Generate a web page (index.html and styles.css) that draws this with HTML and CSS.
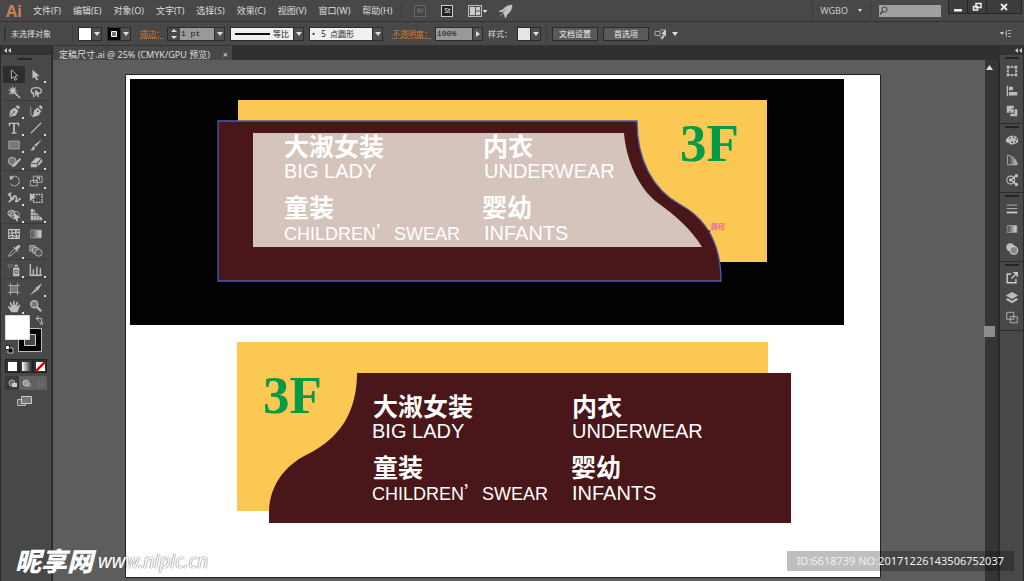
FILE: index.html
```html
<!DOCTYPE html>
<html lang="zh-CN">
<head>
<meta charset="utf-8">
<title>定稿尺寸.ai</title>
<link rel="stylesheet" href="styles.css">
</head>
<body>
<div class="app">
  <header class="menubar">
    <span class="logo">Ai</span>
    <nav class="menus">
      <button>文件(F)</button><button>编辑(E)</button><button>对象(O)</button><button>文字(T)</button><button>选择(S)</button><button>效果(C)</button><button>视图(V)</button><button>窗口(W)</button><button>帮助(H)</button>
    </nav>
    <div class="launchers">
      <button class="badge badge-off">Br</button>
      <button class="badge">St</button>
      <button class="plain" aria-label="排列文档"><svg width="20" height="12" viewBox="0 0 20 12"><rect x=".5" y=".5" width="13" height="11" fill="#555" stroke="#bbb"/><path d="M2 2h5v8H2zM8 2h4v3.500H8zM8 6.500h4V10H8z" fill="#ccc"/><path d="M14.500 5h5L17 8z" fill="#ddd"/></svg></button>
      <button class="plain" aria-label="GPU 性能"><svg width="14" height="14" viewBox="0 0 14 14"><path d="M13 1C8 1 5 4 3.500 6L0 7l3 1.200 5-4-4 5L5 10l1.500 4L8 10.500c3-2.500 5-4.500 5-9.500zM3 10l-2 2.500" fill="#c4c4c4" stroke="#c4c4c4" stroke-width=".6"/></svg></button>
    </div>
    <button class="workspace">WGBO <svg width="4" height="3" viewBox="0 0 4 3"><path d="M0 0h4L2 3z" fill="#ddd"/></svg></button>
    <label class="search"><svg width="11" height="11" viewBox="0 0 11 11"><circle cx="6.500" cy="4.500" r="3" fill="none" stroke="#333"/><path d="M4.500 6.500 1 10" stroke="#333" stroke-width="1.500"/></svg><input type="text" aria-label="搜索"></label>
    <div class="window-buttons">
      <button aria-label="最小化"><svg width="10" height="10" viewBox="0 0 10 10"><path d="M1 7h8v2.500H1z" fill="#eee"/></svg></button>
      <button aria-label="还原"><svg width="10" height="10" viewBox="0 0 10 10"><path d="M4 1.500h5v4H4zM1.500 4.500h4v3.500h-4z" fill="#333" stroke="#eee" stroke-width="1.500"/></svg></button>
      <button class="close" aria-label="关闭"><svg width="10" height="10" viewBox="0 0 10 10"><path d="m2 2 6 6M8 2 2 8" stroke="#eee" stroke-width="1.800"/></svg></button>
    </div>
  </header>

  <div class="options">
    <span class="handle"></span>
    <span class="state">未选择对象</span>
    <span class="rule"></span>
    <div class="field"><button class="swatch" aria-label="填色"></button><button class="drop" aria-label="填色列表"></button></div>
    <div class="field"><button class="swatch stroke-swatch" aria-label="描边颜色"><svg width="12" height="12" viewBox="0 0 12 12"><path d="M3.500 3.500h5v5h-5z" fill="#777" stroke="#fff"/></svg></button><button class="drop" aria-label="描边列表"></button></div>
    <label class="link" for="weight">描边：</label>
    <div class="field"><button class="spin" aria-label="增减"><svg width="8" height="12" viewBox="0 0 8 12"><path d="m1 4 3-3 3 3zM1 8l3 3 3-3z" fill="#ddd"/></svg></button><input id="weight" class="num" value="1 pt"><button class="drop" aria-label="粗细"></button></div>
    <div class="field"><select class="pick profile" aria-label="宽度配置"><option>等比</option></select><button class="drop" aria-label="配置列表"></button></div>
    <div class="field"><select class="pick" aria-label="画笔"><option>&nbsp;• &nbsp; 5 &nbsp;点圆形</option></select><button class="drop" aria-label="画笔列表"></button></div>
    <label class="link" for="opacity">不透明度：</label>
    <div class="field"><input id="opacity" class="num wide" value="100%"><button class="drop side" aria-label="不透明度滑块"></button></div>
    <span>样式：</span>
    <div class="field style-field"><button class="swatch" aria-label="样式"></button><button class="drop" aria-label="样式列表"></button></div>
    <span class="rule"></span>
    <button class="action">文档设置</button>
    <button class="action">首选项</button>
    <button class="plain similar" aria-label="选择类似对象"><svg width="24" height="12" viewBox="0 0 24 12"><path d="M1 3.500h5v4H1zM6 2h5M6 9h3" fill="none" stroke="#aaa"/><path d="m12 1-5 5 2.500.2L7 11l1.500.5L11 7l1 2z" fill="#ccc"/><path d="M18 4h6l-3 4z" fill="#ddd"/></svg></button>
    <button class="plain panel-menu" aria-label="面板菜单"><svg width="12" height="9" viewBox="0 0 12 9"><path d="M0 3h4L2 6zM5 4h2v1H5z" fill="#ccc"/><path d="M6.500 1v7M8 1.500h3M8 4.500h3M8 7.500h3" stroke="#aaa"/></svg></button>
  </div>

  <main class="work">
    <aside class="tools">
      <div class="collapse"><svg width="7" height="5" viewBox="0 0 7 5"><path d="M3 0v5L0 2.500zM7 0v5L4 2.500z" fill="#ccc"/></svg></div>
      <div class="grip"></div>
      <div class="tool-group">
        <button class="on" aria-label="选择"><svg viewBox="0 0 16 16"><path d="m5 2 7 7-3 .4L11 13l-2 1-1.500-4L5 12z" fill="#222" stroke="#c8c8c8"/></svg></button>
        <button class="more" aria-label="直接选择"><svg viewBox="0 0 16 16"><path d="m4 2 8 7-3.500.4 2 4-2 1-2-4L4 12z"/></svg></button>
        <button aria-label="魔棒"><svg viewBox="0 0 16 16"><path d="M6 0v4.500L2.500 2l2 3.500H1l3.500 2L2 11l4-2v3l1.500-3 7 6.500 1-1L9 7.500l3-.5-3-1.500L11 2 7.500 4z"/></svg></button>
        <button aria-label="套索"><svg viewBox="0 0 16 16"><path d="M6 10C1 10 1 3 8 3c7 0 8 6 3 7M5 8c-2 2 2 3 0 6" fill="none" stroke="#bbb" stroke-width="1.600"/><path d="m7 5 6 5-2.500.5 1 3-1.500.5-1.500-3L7 13z"/></svg></button>
      </div>
      <div class="tool-group">
        <button class="more" aria-label="钢笔"><svg viewBox="0 0 16 16"><path d="M2 15 4 7l5-3 4 4-3 5zM10 3l2-2 3 3-2 2z"/><path d="m2 15 5-5" stroke="#444"/><circle cx="8" cy="9" r="1" fill="#444"/></svg></button>
        <button aria-label="曲率"><svg viewBox="0 0 16 16"><path d="M4 15 6 7l4-3 4 4-3 5zM11 3l2-2 3 3-2 2z"/><path d="M1 4c3 0 0 4 1 7s3 3 3 3" fill="none" stroke="#bbb"/><circle cx="10" cy="8" r="1" fill="#444"/></svg></button>
        <button class="more" aria-label="文字"><svg viewBox="0 0 16 16"><path d="M2 2h12v4h-1l-1-2.500H9V13l2 .5v1H5v-1L7 13V3.500H4L3 6H2z"/></svg></button>
        <button class="more" aria-label="直线"><svg viewBox="0 0 16 16"><path d="M2 14 14 2" stroke="#bbb" stroke-width="1.300"/></svg></button>
        <button class="more" aria-label="矩形"><svg viewBox="0 0 16 16"><path d="M2 3.500h12v9H2z" fill="#777" stroke="#aaa"/></svg></button>
        <button class="more" aria-label="画笔"><svg viewBox="0 0 16 16"><path d="m15 1-7 9-2-2zM7 11c-1 3-3 4-6 3 3-1 2-3 4-5z"/></svg></button>
        <button class="more" aria-label="铅笔"><svg viewBox="0 0 16 16"><circle cx="6" cy="7" r="4.500" fill="#777" stroke="#bbb"/><path d="m15 3-8 8-2 3 4-1 7-8z"/></svg></button>
        <button class="more" aria-label="橡皮擦"><svg viewBox="0 0 16 16"><path d="m2 9 6-6h6l-5 6zM2 10h7v4H2zM10 10l5-6v4l-5 5z"/></svg></button>
      </div>
      <div class="tool-group">
        <button class="more" aria-label="旋转"><svg viewBox="0 0 16 16"><path d="M4 5a5.500 5.500 0 1 1 0 6" fill="none" stroke="#bbb" stroke-width="1.400" stroke-dasharray="2 1"/><path d="m3 2 .5 5L8 4z"/></svg></button>
        <button class="more" aria-label="比例缩放"><svg viewBox="0 0 16 16"><path d="M5 2.500h10v7H5zM1.500 7.500h8v6h-8z" fill="none" stroke="#bbb"/><path d="m7 8 4-4M9 4h3v3" fill="none" stroke="#ccc"/></svg></button>
        <button class="more" aria-label="宽度"><svg viewBox="0 0 16 16"><path d="M1 5c5-3 2 6 5 5s1-6 4-4-2 7 1 6 2-4 5-3M2 13 8 6" fill="none" stroke="#bbb" stroke-width="1.800"/><path d="M2 2h4L2 6z"/></svg></button>
        <button aria-label="自由变换"><svg viewBox="0 0 16 16"><path d="M5 4h10v9H5z" fill="none" stroke="#ccc" stroke-width="1.500" stroke-dasharray="2 1"/><path d="m1 2 7 5-3 1-4 4z"/></svg></button>
        <button class="more" aria-label="形状生成器"><svg viewBox="0 0 16 16"><ellipse cx="5" cy="6" rx="4" ry="3.500" fill="#777" stroke="#bbb"/><ellipse cx="9" cy="8" rx="5" ry="4" fill="none" stroke="#bbb"/><path d="m8 5 7 6-3 .5.500 3-2 .5-1-3L8 13z"/></svg></button>
        <button class="more" aria-label="透视网格"><svg viewBox="0 0 16 16"><path d="M2 1h3l2 2v2l4 2v2l4 2v3H2z"/><path d="M5.500 2v12M8.500 4v10M11.500 7v7M2 5h6M2 8.500h12" stroke="#555" stroke-width=".7"/></svg></button>
      </div>
      <div class="tool-group">
        <button aria-label="网格"><svg viewBox="0 0 16 16"><path d="M2 3h12v10H2zM2 6c4 4 7-3 12 1M2 11c5-4 7 2 12-1M6 3c-3 4 3 5 0 10M11 3c-4 4 2 6 0 10" fill="none" stroke="#ccc" stroke-width="1.200"/></svg></button>
        <button aria-label="渐变"><svg viewBox="0 0 16 16"><defs><linearGradient id="g1"><stop stop-color="#444"/><stop offset="1" stop-color="#ddd"/></linearGradient></defs><path d="M2 3.500h12v9H2z" fill="url(#g1)" stroke="#999"/></svg></button>
        <button class="more" aria-label="吸管"><svg viewBox="0 0 16 16"><path d="m8 6-5 5-1 3 3-1 5-5" fill="none" stroke="#bbb"/><path d="m7 4 1-1 1.500 1.500C12 0 15 1 15 2s0 3-3.500 4.500L13 8l-1 1z"/></svg></button>
        <button aria-label="混合"><svg viewBox="0 0 16 16"><rect x="1" y="2" width="6" height="6" fill="#777" stroke="#bbb"/><rect x="4" y="4" width="7" height="7" rx="2" fill="#777" stroke="#bbb"/><circle cx="11" cy="10" r="4" fill="#555" stroke="#bbb"/></svg></button>
      </div>
      <div class="tool-group">
        <button class="more" aria-label="符号喷枪"><svg viewBox="0 0 16 16"><path d="M7 5h7v10H7zM8.500 2h4v2h-4z"/><path d="M1 2h1M3 2h1M5 2h1M1 4h1M3 4h1M5 4h1M2 6h1" stroke="#aaa"/><circle cx="10.500" cy="10" r="2" fill="#bbb" stroke="#444"/></svg></button>
        <button class="more" aria-label="柱形图"><svg viewBox="0 0 16 16"><path d="M1.500 1v13H15M5 14V7M9 14V4M13 14V6" fill="none" stroke="#bbb" stroke-width="1.700"/></svg></button>
      </div>
      <div class="tool-group">
        <button aria-label="画板"><svg viewBox="0 0 16 16"><path d="M4 4h8v8H4z" fill="#777"/><path d="M4 1v14M12 1v14M1 4h14M1 12h14" stroke="#aaa"/></svg></button>
        <button class="more" aria-label="切片"><svg viewBox="0 0 16 16"><path d="m15 1-5 9-3-3zM7 8l2 2-8 5z"/></svg></button>
        <button class="more" aria-label="抓手"><svg viewBox="0 0 16 16"><path d="m5 15-4-6 1-1 3 2-2-6 1.500-.5L7 8l0-6h1.500L9 8l2-5 1.500.5L11 9l3-3 1 1-3 8z"/></svg></button>
        <button aria-label="缩放"><svg viewBox="0 0 16 16"><circle cx="6" cy="6" r="4" fill="#777" stroke="#bbb" stroke-width="1.500"/><path d="m9 9 5 5" stroke="#bbb" stroke-width="2.500"/></svg></button>
      </div>
      <svg class="colors" width="42" height="42" viewBox="0 0 42 42" role="img" aria-label="填色和描边"><path d="M14.500 14.500h23v23h-23z" stroke="#bbb"/><path d="M20.500 20.500h11v11h-11z" fill="#484848" stroke="#ccc"/><path d="M1.500 1.500h24v24h-24z" fill="#fff" stroke="#ddd"/><path d="M33 4.500h4.500V9M35 2l-3 2.500L35 7M35.500 8l2 3 2-3" fill="none" stroke="#bbb"/><path d="M4 34h5v5H4z" stroke="#bbb"/><path d="M1.500 31.500h4v4h-4z" fill="#fff" stroke="#222"/></svg>
      <div class="modes">
        <button aria-label="颜色"><svg width="9" height="9"><path d="M0 0h9v9H0z" fill="#fff"/></svg></button>
        <button aria-label="渐变填色"><svg width="9" height="9"><defs><linearGradient id="g2"><stop stop-color="#fff"/><stop offset="1" stop-color="#333"/></linearGradient></defs><path d="M0 0h9v9H0z" fill="url(#g2)"/></svg></button>
        <button aria-label="无"><svg width="9" height="9"><path d="M0 0h9v9H0z" fill="#fff"/><path d="m0 9 9-9" stroke="#d00" stroke-width="2.500"/></svg></button>
      </div>
      <div class="modes drawing">
        <button aria-label="正常绘图"><svg width="9" height="9"><circle cx="4" cy="4" r="3" fill="#666" stroke="#aaa"/><path d="M4 4h5v4H4z" fill="#ccc"/></svg></button>
        <button aria-label="背面绘图"><svg width="9" height="9"><path d="M4 4h5v4H4z" fill="#888"/><circle cx="4" cy="4" r="3" fill="#999" stroke="#bbb"/></svg></button>
        <button aria-label="内部绘图"><svg width="9" height="9"><circle cx="4.500" cy="4.500" r="3" fill="none" stroke="#777"/></svg></button>
      </div>
      <button class="plain screen" aria-label="屏幕模式"><svg width="16" height="12" viewBox="0 0 16 12"><path d="M1.500 4.500h8v6h-8z" fill="#666" stroke="#bbb"/><path d="M5.500 1.500h10v7h-10z" fill="#777" stroke="#ccc"/></svg></button>
    </aside>

    <section class="document">
      <div class="tabs"><div class="tab"><span>定稿尺寸.ai @ 25% (CMYK/GPU 预览)</span><button class="plain" aria-label="关闭文档">×</button></div></div>
      <div class="view">
        <div class="pasteboard">
          <svg class="artboard" viewBox="125 74 756 504">
            <path d="M125.500 74.500h755v503h-755z" fill="#fff" stroke="#222"/>
            <path d="M130 79h714v246H130z" fill="#020202"/>
            <path d="M238 100h529v162H238z" fill="#fbc853"/>
            <path d="M218 121H637C637 160 653 190 681 205C708 220 721 245 721 281H218Z" fill="#491619" stroke="#4d5cb4" stroke-width="1.300"/>
            <path d="M253 133H624C626 160 639 189 658 203C675 215 692 230 702 247H253Z" fill="#d4c4bc"/>
            <g class="sign">
              <text class="zh" x="284" y="156">大淑女装</text><text class="zh" x="483" y="156">内衣</text>
              <text class="en" x="284" y="178">BIG LADY</text><text class="en" x="484" y="178">UNDERWEAR</text>
              <text class="zh" x="284" y="217">童装</text><text class="zh" x="482" y="217">婴幼</text>
              <text class="en small" x="284" y="240">CHILDREN<tspan class="quote">’</tspan>SWEAR</text><text class="en" x="484" y="240">INFANTS</text>
            </g>
            <text class="floor" x="680" y="161">3F</text>
            <path d="m707 230 2 2 1-2" fill="none" stroke="#222"/>
            <text class="hint" x="711" y="229">路径</text>
            <path d="M237 342h531v169H237z" fill="#fbc853"/>
            <path d="M357 373H791V523H269V513C269 490 281 467 308 454C340 438 357 412 357 373Z" fill="#491619"/>
            <g class="sign">
              <text class="zh" x="373" y="416">大淑女装</text><text class="zh" x="572" y="416">内衣</text>
              <text class="en" x="372" y="438">BIG LADY</text><text class="en" x="572" y="438">UNDERWEAR</text>
              <text class="zh" x="373" y="477">童装</text><text class="zh" x="571" y="477">婴幼</text>
              <text class="en small" x="372" y="500">CHILDREN<tspan class="quote">’</tspan>SWEAR</text><text class="en" x="572" y="500">INFANTS</text>
            </g>
            <text class="floor" x="263" y="413">3F</text>
          </svg>
        </div>
        <div class="scroll"><svg width="7" height="5" viewBox="0 0 7 5"><path d="m0 5 3.500-5L7 5z" fill="#ddd"/></svg><span class="thumb"></span></div>
      </div>
    </section>

    <aside class="dock">
      <div class="collapse"><svg width="7" height="5" viewBox="0 0 7 5"><path d="M3 0v5L0 2.500zM7 0v5L4 2.500z" fill="#ccc"/></svg></div>
      <div class="dock-group"><span class="grip"></span>
        <button aria-label="变换"><svg viewBox="0 0 16 16"><path d="M3.500 3.500h9v9h-9z" fill="none" stroke="#bbb"/><path d="M2 2h3v3H2zM7 2h2v2H7zM11 2h3v3h-3zM2 7h2v2H2zM12 7h2v2h-2zM2 11h3v3H2zM7 12h2v2H7zM11 11h3v3h-3z"/></svg></button>
        <button aria-label="对齐"><svg viewBox="0 0 16 16"><path d="M2 2h1.500v12H2zM4.500 3H9v4H4.500zM4.500 9H14v4H4.500z"/></svg></button>
        <button aria-label="路径查找器"><svg viewBox="0 0 16 16"><path d="M2 2h8v3H7v3H5v2H2zM6 6h4v4H6zM11 6h3v8H6v-3h5z"/></svg></button>
      </div>
      <div class="dock-group"><span class="grip"></span>
        <button aria-label="颜色面板"><svg viewBox="0 0 16 16"><path d="M1 9c0-3 3-6 8-6s6 4 6 6-3 4-7 4-3-2-4-2-3 0-3-2z"/><path d="M5 6h1.500M9 5h1.500M12 7h1.500M11 10h1.500M7 10.500h2" stroke="#444" stroke-width="1.800"/></svg></button>
        <button aria-label="颜色参考"><svg viewBox="0 0 16 16"><defs><linearGradient id="g3"><stop stop-color="#333"/><stop offset="1" stop-color="#ccc"/></linearGradient></defs><path d="M3 2.500c6 1 10 5 11 11H3z" fill="url(#g3)" stroke="#bbb"/></svg></button>
        <button aria-label="编辑颜色"><svg viewBox="0 0 16 16"><circle cx="6.500" cy="8" r="4.500" fill="none" stroke="#bbb" stroke-width="1.300"/><circle cx="6.500" cy="8" r="2"/><path d="m8 7 5-4M8 9l5 4" stroke="#ccc" stroke-width="1.500"/><circle cx="13" cy="3" r="2"/><circle cx="13" cy="13" r="2"/></svg></button>
      </div>
      <div class="dock-group"><span class="grip"></span>
        <button aria-label="描边面板"><svg viewBox="0 0 16 16"><path d="M2 3.500h12M2 7.500h12" stroke="#bbb"/><path d="M2 12h12" stroke="#ccc" stroke-width="2"/></svg></button>
        <button aria-label="渐变面板"><svg viewBox="0 0 16 16"><path d="M2.500 4h11v8h-11z" fill="url(#g1)" stroke="#999"/></svg></button>
        <button aria-label="透明度面板"><svg viewBox="0 0 16 16"><circle cx="6" cy="6" r="4.500"/><circle cx="10" cy="9.500" r="4.500" fill="#888" stroke="#ccc" stroke-width="1.300"/></svg></button>
      </div>
      <div class="dock-group"><span class="grip"></span>
        <button aria-label="资源导出"><svg viewBox="0 0 16 16"><path d="M7 3.500H2.500v10h10V9M7.500 8.500 13 3M9.500 2H14v4.500" fill="none" stroke="#ccc" stroke-width="1.600"/></svg></button>
        <button aria-label="图层"><svg viewBox="0 0 16 16"><path d="m8 1 7 4-7 4-7-4zM3 8l5 3 5-3 2 2-7 4-7-4z"/></svg></button>
        <button aria-label="画板面板"><svg viewBox="0 0 16 16"><path d="M2 1.500h8v8H2zM6 6.500h8v7H6z" fill="#484848" stroke="#bbb"/></svg></button>
      </div>
    </aside>
  </main>

  <footer class="marks">
    <div class="brand"><strong>昵享网</strong><span>www.nipic.cn</span></div>
    <p class="ident">ID:6618739 NO:20171226143506752037</p>
  </footer>
</div>
</body>
</html>
```

FILE: styles.css
```css
* { box-sizing: border-box; }
body {
  margin: 0;
  background: #484848;
  color: #ddd;
  font: 9px/12px "Noto Sans", "Noto Sans CJK SC", sans-serif;
}
button, input, select {
  margin: 0;
  padding: 0;
  border: 0;
  border-radius: 0;
  background: none;
  color: inherit;
  font: inherit;
}
svg { display: block; }
.plain { display: flex; align-items: center; }

.app {
  position: relative;
  display: flex;
  flex-direction: column;
  min-height: 100vh;
  overflow: hidden;
}

/* menu bar */
.menubar {
  display: flex;
  align-items: center;
  height: 22px;
  padding: 0 2px 0 6px;
  border-bottom: 1px solid #333;
}
.logo {
  width: 27px;
  color: #c88058;
  font: bold 16px/20px "Open Sans", sans-serif;
}
.menus { display: flex; gap: 12px; }
.menus button { white-space: nowrap; }
.launchers {
  display: flex;
  align-items: center;
  gap: 15px;
  margin-left: 9px;
  padding-left: 12px;
  border-left: 1px solid #3a3a3a;
}
.badge {
  width: 12px;
  height: 12px;
  border: 1px solid #ccc;
  background: #222;
  color: #fff;
  font-size: 7px;
  line-height: 9px;
}
.badge-off { border-color: #666; background: #444; color: #777; }
.launchers .plain + .plain { margin-left: -4px; }
.workspace {
  display: flex;
  align-items: center;
  gap: 10px;
  height: 17px;
  margin-left: auto;
  padding: 0 8px 0 7px;
  border: solid #3a3a3a;
  border-width: 0 1px;
  color: #c8c8c8;
}
.search {
  display: flex;
  align-items: center;
  width: 62px;
  height: 12px;
  margin: 0 7px 0 8px;
  background: #a0a0a0;
}
.search input { width: 100%; min-width: 0; }
.window-buttons {
  display: flex;
  align-self: flex-start;
  height: 14px;
  border: 1px solid #252525;
  border-top: 0;
  background: #3d3d3d;
}
.window-buttons button {
  display: grid;
  place-items: center;
  width: 19px;
  border-right: 1px solid #252525;
}
.window-buttons .close { width: 34px; border: 0; }

/* options bar */
.options {
  display: flex;
  align-items: center;
  gap: 5px;
  height: 24px;
  padding: 0 12px 0 4px;
  border-bottom: 1px solid #333;
  font-size: 8px;
  white-space: nowrap;
}
.handle { width: 2px; height: 14px; background: #353535; }
.state { width: 56px; }
.rule { width: 1px; height: 18px; background: #3d3d3d; }
.field { display: flex; height: 14px; border: 1px solid #2c2c2c; }
.swatch { width: 12px; background: #fff; }
.style-field .swatch { background: #e6e6e6; }
.stroke-swatch { background: #000; }
.drop {
  display: grid;
  place-items: center;
  width: 10px;
  border-left: 1px solid #2c2c2c;
  background: #505050;
}
.drop::after {
  content: "";
  border: 3px solid transparent;
  border-top: 4px solid #ddd;
  border-bottom: 0;
}
.side::after { border: 3px solid transparent; border-left: 4px solid #ddd; border-right: 0; }
.link {
  margin-left: 4px;
  color: #d67a2c;
  text-decoration: underline dotted;
}
.link + .field { margin-left: -2px; }
.spin { display: grid; place-items: center; width: 12px; }
.num {
  width: 34px;
  padding-left: 1px;
  background: #999;
  color: #111;
  font-family: "Liberation Mono", monospace;
}
.wide { width: 36px; }
.pick {
  appearance: none;
  width: 62px;
  background: #f0f0f0;
  color: #222;
}
.profile {
  padding-left: 42px;
  background: linear-gradient(#111, #111) 4px 5px / 35px 2px no-repeat #f0f0f0;
}
.action {
  width: 46px;
  height: 14px;
  border: 1px solid #2c2c2c;
  background: #5a5a5a;
  color: #eee;
}
.panel-menu { margin-left: auto; }

/* workspace */
.work { display: flex; flex: 1; }
.collapse {
  display: flex;
  align-items: center;
  height: 9px;
  padding: 0 3px;
  background: #333;
}
.grip { display: block; height: 2px; background: #252525; }
.tools {
  display: flex;
  flex: none;
  flex-direction: column;
  width: 53px;
  border: solid #2c2c2c;
  border-width: 0 2px 0 1px;
}
.tools > .grip { width: 14px; margin: 3px 0 6px 17px; }
.tool-group {
  display: grid;
  grid-template-columns: 22px 22px;
  grid-auto-rows: 17px;
  margin: 0 4px 0 2px;
}
.tool-group + .tool-group { padding-top: 1px; border-top: 1px solid #3a3a3a; }
.tool-group button {
  position: relative;
  display: grid;
  place-items: center;
}
.tool-group .on { background: #2e2e2e; }
.tool-group svg, .dock-group svg { width: 14px; height: 14px; fill: #bdbdbd; }
.more::after {
  position: absolute;
  right: 1px;
  bottom: 0;
  border: 1px solid #ddd;
  content: "";
}
.colors { margin: 0 0 0 3px; }
.modes {
  display: flex;
  width: 42px;
  height: 14px;
  margin: 3px 0 0 4px;
  background: #333;
}
.modes button { display: grid; flex: 1; place-items: center; border: 1px solid #222; }
.drawing { background: #606060; }
.drawing button { border: 0; }
.drawing button:first-child { background: #3a3a3a; }
.screen { margin: 5px 0 0 15px; }

.document { display: flex; flex: 1; flex-direction: column; min-width: 0; }
.tabs { display: flex; height: 14px; background: #303030; }
.tab {
  display: flex;
  align-items: center;
  gap: 13px;
  padding: 4px 4px 0 6px;
  background: #484848;
  white-space: nowrap;
}
.view { display: flex; flex: 1; }
.pasteboard { flex: 1; min-width: 0; padding: 14px 104px 3px 72px; background: #5d5d5d; }
.artboard { width: 100%; height: auto; }
.scroll {
  display: flex;
  flex: none;
  flex-direction: column;
  align-items: center;
  width: 15px;
  padding: 5px 4px 0 0;
  border-right: 2px solid #292929;
  background: #353535;
}
.thumb { width: 11px; height: 11px; margin-top: 256px; background: #8c8c8c; }

.sign { fill: #fff; }
.zh { font: 700 25px "Noto Sans CJK SC", sans-serif; }
.en { font: 20px "Liberation Sans", sans-serif; }
.small { font-size: 18px; }
.quote { font-family: "Noto Sans CJK SC", sans-serif; }
.floor { fill: #039a48; font: bold 53px "Liberation Serif", serif; }
.hint { fill: #f060c8; font: 700 7px "Noto Sans CJK SC", sans-serif; }

.dock { flex: none; width: 24px; border-right: 1px solid #2c2c2c; }
.dock .collapse { justify-content: flex-end; padding: 0 1px; }
.dock-group {
  display: grid;
  grid-auto-rows: 20px;
  grid-template-rows: 6px;
  padding-bottom: 2px;
  border-bottom: 1px solid #2c2c2c;
}
.dock-group .grip { width: 14px; margin: 2px 0 0 5px; }
.dock-group button { display: grid; place-items: center; }

/* watermarks over the page */
.marks {
  position: absolute;
  right: 10px;
  bottom: 10px;
  left: 15px;
  display: flex;
  align-items: flex-end;
  justify-content: space-between;
  pointer-events: none;
}
.brand {
  display: flex;
  align-items: center;
  gap: 5px;
  color: #fff;
  font-style: italic;
  line-height: 20px;
}
.brand strong { font-size: 26px; font-weight: 900; }
.brand span { font-size: 19px; text-shadow: 0 0 1px #666, 0 0 1px #666; }
.ident {
  margin: 0;
  padding: 0 10px;
  background: rgba(0, 0, 0, .25);
  color: #f0f0f0;
  font: 11px/20px "Noto Sans", sans-serif;
}
```
